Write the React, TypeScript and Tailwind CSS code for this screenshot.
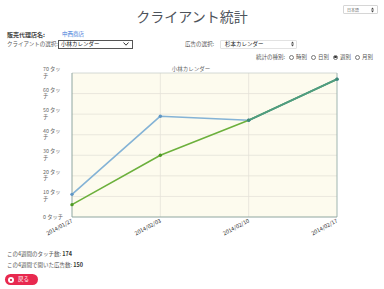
const X = [72, 160.33, 248.67, 337];
const TOP = 11;
const BOTTOM = 155;
const yOf = (v: number) => BOTTOM - (v * (BOTTOM - TOP)) / 70;

const TOUCHES = [11, 49, 47, 67];
const ADS = [6, 30, 47, 67];
const DATES = ["2014/01/27", "2014/02/03", "2014/02/10", "2014/02/17"];

function UpDown({ className = "" }: { className?: string }) {
  return (
    <svg width="3" height="6" viewBox="0 0 3 6" className={className}>
      <path d="M0 2.4 L1.5 0.6 L3 2.4 Z M0 3.6 L1.5 5.4 L3 3.6 Z" fill="#444" />
    </svg>
  );
}

function Radio({ checked, label }: { checked?: boolean; label: string }) {
  return (
    <span className="flex items-center gap-[2px]">
      <span className="flex h-[5px] w-[5px] items-center justify-center rounded-full border-[0.7px] border-[#777] bg-white">
        {checked && <span className="h-[2.6px] w-[2.6px] rounded-full bg-[#333]" />}
      </span>
      <span>{label}</span>
    </span>
  );
}

function Chart() {
  const line = (vals: number[]) => vals.map((v, i) => `${X[i]},${yOf(v)}`).join(" ");
  const grid = [10, 20, 30, 40, 50, 60];
  return (
    <svg width="384" height="178" viewBox="0 0 384 178" className="block">
      <text x="191" y="9" textAnchor="middle" fontSize="5.5" fill="#666">
        小林カレンダー
      </text>
      <rect x={X[0]} y={TOP} width={X[3] - X[0]} height={BOTTOM - TOP} fill="#fdfbee" />
      {grid.map((v) => (
        <line key={v} x1={X[0]} x2={X[3]} y1={yOf(v)} y2={yOf(v)} stroke="#e4e2d8" strokeWidth="0.8" />
      ))}
      {X.slice(1, 3).map((x) => (
        <line key={x} x1={x} x2={x} y1={TOP} y2={BOTTOM} stroke="#e4e2d8" strokeWidth="0.8" />
      ))}
      <line x1={X[0]} x2={X[3]} y1={TOP} y2={TOP} stroke="#c9d0cc" strokeWidth="0.8" />
      <line x1={X[3]} x2={X[3]} y1={TOP} y2={BOTTOM} stroke="#9fb5b0" strokeWidth="1" />
      <line x1={X[0]} x2={X[0]} y1={TOP} y2={BOTTOM} stroke="#8fa6a0" strokeWidth="1" />
      <line x1={X[0]} x2={X[3]} y1={BOTTOM} y2={BOTTOM} stroke="#8fa6a0" strokeWidth="1" />

      {[70, 60, 50, 40, 30, 20, 10].map((v) => (
        <text key={v} fontSize="5.3" fill="#666">
          <tspan x="43" y={yOf(v) - 2}>{`${v} タッ`}</tspan>
          <tspan x="43" y={yOf(v) + 4.6}>チ</tspan>
        </text>
      ))}
      <text x="43" y={BOTTOM + 2} fontSize="5.3" fill="#666">
        0 タッチ
      </text>

      <polyline points={line(TOUCHES)} fill="none" stroke="#84b3d6" strokeWidth="1.6" strokeLinejoin="round" />
      <polyline points={line(ADS)} fill="none" stroke="#6cb03c" strokeWidth="1.6" strokeLinejoin="round" />
      <line x1={X[2]} y1={yOf(47)} x2={X[3]} y2={yOf(67)} stroke="#4f9c82" strokeWidth="1.8" />
      {TOUCHES.map((v, i) => (
        <circle key={`t${i}`} cx={X[i]} cy={yOf(v)} r="1.7" fill="#5f96c4" />
      ))}
      {ADS.map((v, i) => (
        <circle key={`a${i}`} cx={X[i]} cy={yOf(v)} r="1.7" fill={i >= 2 ? "#3f8a72" : "#4d9a24"} />
      ))}

      {DATES.map((d, i) => (
        <text
          key={d}
          x={X[i] + 1}
          y={BOTTOM + 5}
          fontSize="5.5"
          fill="#333"
          textAnchor="end"
          transform={`rotate(-28 ${X[i] + 1} ${BOTTOM + 5})`}
        >
          {d}
        </text>
      ))}
    </svg>
  );
}

export default function App() {
  return (
    <div className="h-[289px] w-[384px] overflow-hidden bg-white font-['Noto_Sans_CJK_JP','Noto_Sans',sans-serif] text-[5.5px] text-[#555]">
      <header className="grid h-[29px] grid-cols-[1fr_auto_1fr] items-start pt-[6px]">
        <div />
        <h1 className="text-[14px] leading-[20px] text-[#4d535b]">クライアント統計</h1>
        <div className="mr-[6px] mt-[-1px] flex h-[9px] w-[35px] items-center justify-between justify-self-end rounded-[1px] border border-[#d6d6d6] px-[3px] text-[4px] text-[#666]">
          <span>日本語</span>
          <UpDown />
        </div>
      </header>

      <div className="flex h-[10px] items-center pl-[7px]">
        <span className="w-[55px] font-bold text-[6px] text-[#444]">販売代理店名:</span>
        <span className="text-[#3a78d8]">中西商店</span>
      </div>

      <div className="flex h-[10px] items-center pl-[7px]">
        <div className="flex w-[178px] items-center">
          <span className="w-[51px]">クライアントの選択:</span>
          <div className="flex h-[9px] w-[75px] items-center justify-between border border-[#555] bg-white pl-[2px] pr-[3px] text-[#222]">
            <span>小林カレンダー</span>
            <svg width="6" height="4" viewBox="0 0 6 4">
              <polyline points="0.5,0.5 3,3.2 5.5,0.5" fill="none" stroke="#222" strokeWidth="0.9" />
            </svg>
          </div>
        </div>
        <span className="w-[35px]">広告の選択:</span>
        <div className="flex h-[9px] w-[77px] items-center justify-between rounded-[1px] border border-[#e2e2e2] bg-white pl-[4px] pr-[2px] text-[#222]">
          <span>杉本カレンダー</span>
          <UpDown />
        </div>
      </div>

      <div className="mt-[3px] flex h-[10px] items-center justify-end gap-[4px] pr-[11px]">
        <span>統計の種別:</span>
        <Radio label="時別" />
        <Radio label="日別" />
        <Radio checked label="週別" />
        <Radio label="月別" />
      </div>

      <Chart />

      <div className="pl-[7px] pt-[9px]">
        <p className="leading-[11px]">
          この4週間のタッチ数: <b className="text-[#333]">174</b>
        </p>
        <p className="leading-[11px]">
          この4週間で開いた広告数: <b className="text-[#333]">150</b>
        </p>
        <button className="mt-[3px] ml-[-2px] flex h-[11px] w-[33px] items-center gap-[4px] rounded-full bg-[#e8294f] pl-[3px] text-[5.5px] text-white">
          <span className="flex h-[6px] w-[6px] items-center justify-center rounded-full bg-white">
            <span className="h-[2px] w-[2px] rounded-full bg-[#c0102f]" />
          </span>
          <span>戻る</span>
        </button>
      </div>
    </div>
  );
}
